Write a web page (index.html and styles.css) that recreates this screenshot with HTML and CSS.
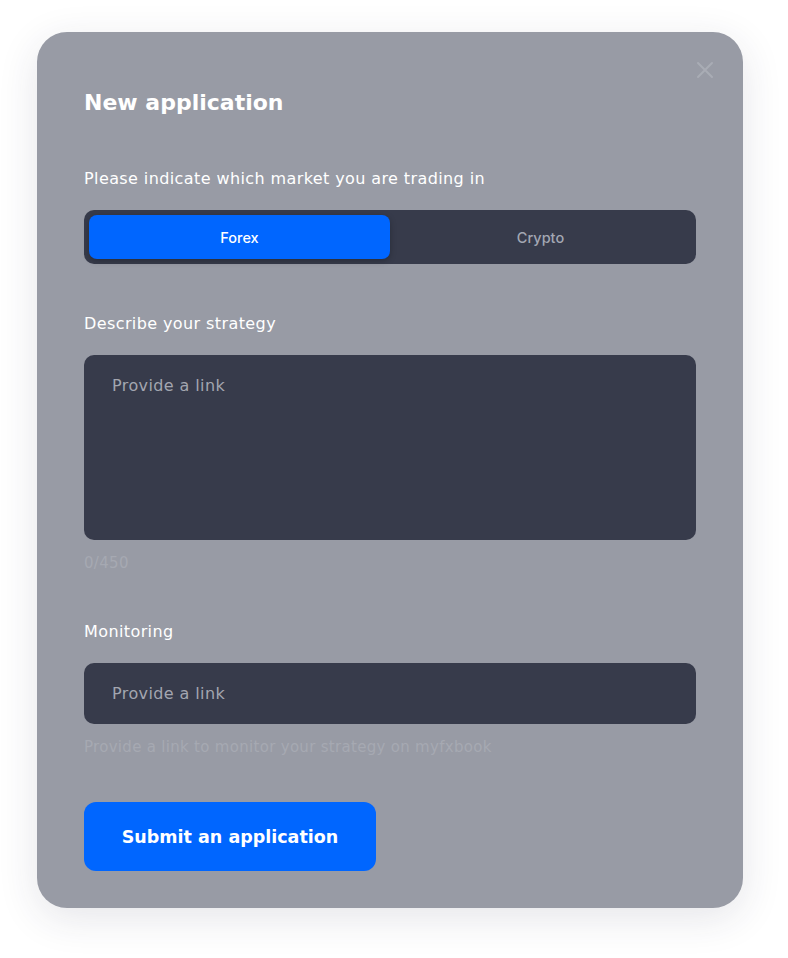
FILE: index.html
```html
<!DOCTYPE html>
<html lang="en">
<head>
  <meta charset="UTF-8" />
  <title>New application</title>
  <link rel="stylesheet" href="styles.css">
</head>
<body>
  <div class="modal">
    <button class="close" aria-label="Close">
      <svg width="18" height="18" viewBox="0 0 18 18">
        <path d="M2 2 L16 16 M16 2 L2 16" stroke="#a9acb5" stroke-width="2" stroke-linecap="round" fill="none"/>
      </svg>
    </button>

    <h2>New application</h2>

    <!-- Market -->
    <p class="label">Please indicate which market you are trading in</p>
    <div class="toggle">
      <button class="tab active">Forex</button>
      <button class="tab">Crypto</button>
    </div>

    <!-- Strategy -->
    <p class="label label-strategy">Describe your strategy</p>
    <textarea class="field area" placeholder="Provide a link"></textarea>
    <p class="hint counter">0/450</p>

    <!-- Monitoring -->
    <p class="label label-monitor">Monitoring</p>
    <input class="field" type="text" placeholder="Provide a link" />
    <p class="hint">Provide a link to monitor your strategy on myfxbook</p>

    <button class="submit">Submit an application</button>
  </div>
</body>
</html>
```

FILE: styles.css
```css
body {
  margin: 0;
  padding-bottom: 50px;
  background: #ffffff;
  font-family: "DejaVu Sans", "Open Sans", sans-serif;
}

.modal {
  position: relative;
  box-sizing: border-box;
  width: 706px;
  height: 876px;
  margin: 32px 0 0 37px;
  padding: 0 47px;
  background: #989ba5;
  border-radius: 30px;
  box-shadow: 0 10px 40px rgba(40, 45, 70, 0.12);
  display: flex;
  flex-direction: column;
}

.close {
  position: absolute;
  top: 29px;
  right: 29px;
  width: 18px;
  height: 18px;
  padding: 0;
  border: none;
  background: none;
  cursor: pointer;
}

h2 {
  margin: 58px 0 0 0;
  font-size: 22px;
  line-height: 26px;
  font-weight: bold;
  color: #ffffff;
}

.label {
  margin: 53px 0 0 0;
  font-size: 16px;
  line-height: 20px;
  letter-spacing: 0.4px;
  color: #ffffff;
}

.toggle {
  margin-top: 21px;
  height: 54px;
  box-sizing: border-box;
  padding: 5px;
  background: #373b4b;
  border-radius: 10px;
  display: grid;
  grid-template-columns: 1fr 1fr;
}

.tab {
  border: none;
  background: none;
  border-radius: 8px;
  font-family: "Inter", "Open Sans", sans-serif;
  font-size: 14.5px;
  font-weight: 500;
  color: #a3a7b3;
  cursor: pointer;
}

.tab.active {
  background: #0066ff;
  color: #ffffff;
  box-shadow: 0 2px 6px rgba(0, 0, 0, 0.25);
}

.label-strategy {
  margin-top: 50px;
}

.field {
  box-sizing: border-box;
  width: 100%;
  margin-top: 21px;
  height: 61px;
  padding: 0 28px;
  border: none;
  border-radius: 10px;
  background: #373b4b;
  font-family: inherit;
  font-size: 16px;
  letter-spacing: 0.4px;
  color: #ffffff;
  outline: none;
}

.field::placeholder {
  color: #a3a6b0;
}

.area {
  height: 185px;
  padding-top: 20px;
  resize: none;
  line-height: 22px;
}

.hint {
  margin: 14px 0 0 0;
  font-size: 15px;
  line-height: 18px;
  letter-spacing: 0.3px;
  color: #a6a9b2;
}

.label-monitor {
  margin-top: 50px;
}

.submit {
  margin-top: 46px;
  width: 292px;
  height: 69px;
  border: none;
  border-radius: 12px;
  background: #0066ff;
  font-family: inherit;
  font-size: 17.5px;
  font-weight: bold;
  color: #ffffff;
  cursor: pointer;
}
```
